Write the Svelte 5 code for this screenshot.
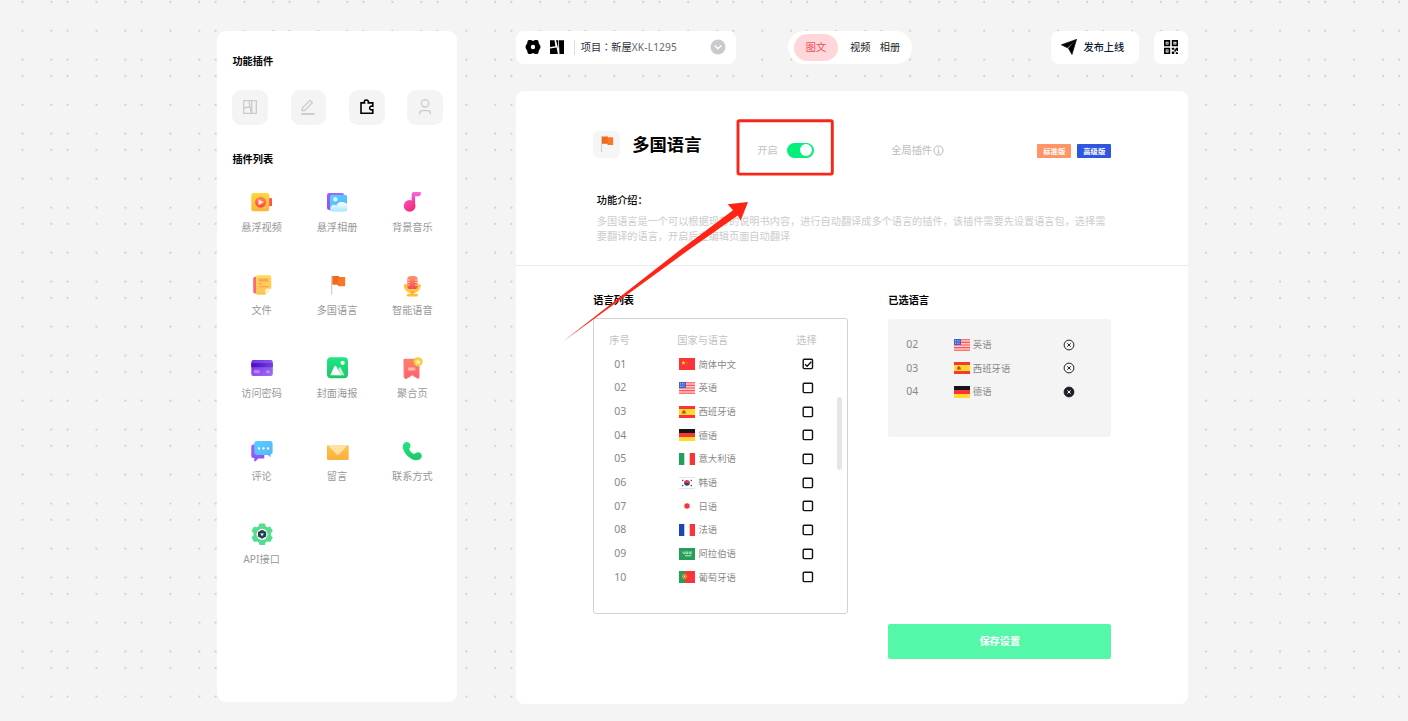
<script>
    const plugins = [
        { icon: 'video', name: '悬浮视频' },
        { icon: 'album', name: '悬浮相册' },
        { icon: 'music', name: '背景音乐' },
        { icon: 'file', name: '文件' },
        { icon: 'flag', name: '多国语言' },
        { icon: 'mic', name: '智能语音' },
        { icon: 'card', name: '访问密码' },
        { icon: 'poster', name: '封面海报' },
        { icon: 'bookmark', name: '聚合页' },
        { icon: 'comment', name: '评论' },
        { icon: 'mail', name: '留言' },
        { icon: 'phone', name: '联系方式' },
        { icon: 'api', name: 'API接口' }
    ];

    let languages = [
        { id: '01', flag: 'cn', name: '简体中文', checked: true },
        { id: '02', flag: 'us', name: '英语', checked: false },
        { id: '03', flag: 'es', name: '西班牙语', checked: false },
        { id: '04', flag: 'de', name: '德语', checked: false },
        { id: '05', flag: 'it', name: '意大利语', checked: false },
        { id: '06', flag: 'kr', name: '韩语', checked: false },
        { id: '07', flag: 'jp', name: '日语', checked: false },
        { id: '08', flag: 'fr', name: '法语', checked: false },
        { id: '09', flag: 'sa', name: '阿拉伯语', checked: false },
        { id: '10', flag: 'pt', name: '葡萄牙语', checked: false }
    ];

    let selected = [
        { id: '02', flag: 'us', name: '英语' },
        { id: '03', flag: 'es', name: '西班牙语' },
        { id: '04', flag: 'de', name: '德语', active: true }
    ];

    let tab = 'plugin';
    let enabled = true;

    // background dots, three per tile on each axis
    const tile = 73.975;
    const xs = [];
    const ys = [];
    for (let i = -1; i < 20; i++) {
        for (const o of [22.5, 51.4, 67.6]) xs.push(o + i * tile);
    }
    for (let i = 0; i < 10; i++) {
        for (const o of [2, 30.8, 59.7]) ys.push(o + i * tile);
    }

    const remove = (id) => {
        selected = selected.filter((s) => s.id !== id);
    };
</script>

{#snippet flagIcon(code)}
    <svg class="flag" width="16" height="12" viewBox="0 0 16 12">
        {#if code === 'cn'}
            <rect width="16" height="12" fill="#fb3437" />
            <path d="M4.5 2.6l.6 1.5 1.5.1-1.2 1 .4 1.6-1.3-.9-1.4.9.4-1.6-1.1-1 1.5-.1z" fill="#ffda2c" />
            <path d="M7.2 2.6l.8.8M8.2 4.3v1M7 6.6l.7-.5" stroke="#e8a02c" stroke-width=".7" />
        {:else if code === 'us'}
            <rect width="16" height="12" fill="#ffc9c9" />
            <path d="M0 .8h16M0 3.4h16M0 6h16M0 8.6h16M0 11.3h16" stroke="#fb5558" stroke-width="1.1" />
            <rect width="7" height="6" fill="#3d62cc" />
            <path d="M1 1.5h5M1 3h5M1 4.5h5" stroke="#b9c8f3" stroke-width=".7" stroke-dasharray="1 .8" />
        {:else if code === 'es'}
            <rect width="16" height="12" fill="#fb3437" />
            <rect y="3" width="16" height="6" fill="#ffda2c" />
            <path d="M2.7 7.8L3.3 5l1.5-1.2L6.4 5l1 2.8z" fill="#c7772b" />
            <path d="M4.3 5h1.2v2H4.3z" fill="#a32c2c" />
        {:else if code === 'de'}
            <rect width="16" height="4" fill="#151515" />
            <rect y="4" width="16" height="4" fill="#fb3437" />
            <rect y="8" width="16" height="4" fill="#ffda2c" />
        {:else if code === 'it'}
            <rect width="16" height="12" fill="#fff" />
            <rect width="5.3" height="12" fill="#249f58" />
            <rect x="10.7" width="5.3" height="12" fill="#fb3437" />
        {:else if code === 'kr'}
            <rect width="16" height="12" fill="#fff" />
            <path d="M0 .3h16M0 11.7h16" stroke="#cfcfcf" stroke-width=".7" />
            <circle cx="8" cy="6" r="2.8" fill="#24398f" />
            <path d="M5.200 6a2.800 2.800 0 0 1 5.600 0Q9.500 7 8 6T5.200 6z" fill="#fb3437" />
            <path d="M3.200 4l1-1.200M12.800 4l-1-1.200M3.200 8l1 1.200M12.800 8l-1 1.200" stroke="#333" stroke-width="1.100" />
        {:else if code === 'jp'}
            <rect width="16" height="12" fill="#fff" />
            <circle cx="8" cy="6" r="2.700" fill="#fb3437" />
        {:else if code === 'fr'}
            <rect width="16" height="12" fill="#fff" />
            <rect width="5.3" height="12" fill="#1b46b9" />
            <rect x="10.7" width="5.3" height="12" fill="#fb3437" />
        {:else if code === 'sa'}
            <rect width="16" height="12" fill="#249f58" />
            <path d="M3.500 3.500l1 2.200h1.300V3.500M7 3.300v2.400h1.500V3.500M10 3.500v2.200h2.200V3.300M10.700 4.200h1" fill="none" stroke="#d6f0e0" stroke-width=".8" />
            <path d="M6 7.800h6.300" stroke="#d6f0e0" stroke-width=".9" />
        {:else if code === 'pt'}
            <rect width="16" height="12" fill="#fb3437" />
            <rect width="6" height="12" fill="#249f58" />
            <circle cx="5.500" cy="5.500" r="2.300" fill="#f6b52c" />
            <rect x="4.500" y="4.400" width="2" height="2.200" fill="#d84535" />
            <rect x="5.100" y="5" width=".8" height="1" fill="#fff" />
        {/if}
    </svg>
{/snippet}

{#snippet pluginIcon(name)}
    <svg class="pluginIcon" width="24" height="24" viewBox="0 0 24 24">
        {#if name === 'video'}
            <rect x="17" y="8" width="5" height="8.300" rx="1" fill="#ff5353" />
            <rect x="1.300" y="3" width="17.900" height="18.300" rx="2.200" fill="url(#gYellow)" />
            <circle cx="10.600" cy="12.200" r="5.500" fill="url(#gRed)" />
            <path d="M8.800 9.700v5l4.600-2.500z" fill="#ffe9dc" stroke="#ffe9dc" stroke-width=".6" stroke-linejoin="round" />
        {:else if name === 'album'}
            <rect x="2" y="3" width="17" height="17" rx="2.200" fill="url(#gPurple)" />
            <rect x="5" y="4.700" width="17" height="16.600" rx="2" fill="url(#gSky)" />
            <circle cx="10.300" cy="9.300" r="2.200" fill="#d5f4ff" />
            <path d="M5.500 20.800v-3.500c1.500-3 4-3.300 5.800-1.500 1.700-4 6-5 10.700-1.700v5.200a2 2 0 0 1-2 2H7z" fill="url(#gCloud)" />
        {:else if name === 'music'}
            <path d="M11.700 3.500a2 2 0 0 1 2-1.500h7.100v1.300c0 2-.8 3-2.600 3h-3.100v9.500h-3.400z" fill="url(#gNote)" />
            <circle cx="9.600" cy="15.900" r="5.900" fill="url(#gPink)" />
        {:else if name === 'file'}
            <rect x="3.200" y="3.800" width="6" height="16.600" rx="2" fill="#ff6870" />
            <path d="M8 2.300h11.300a2 2 0 0 1 2 2v11.200l-6 6.300H8a2 2 0 0 1-2-2V4.300a2 2 0 0 1 2-2z" fill="url(#gFile)" />
            <path d="M15.300 21.800v-4.600q0-1.700 1.800-1.700h4.200z" fill="#fff2d0" />
            <path d="M8.500 10.600h3.500M8.500 13.700h10" stroke="#ffa04c" stroke-width="1.200" />
            <path d="M8.500 5.500h10v3.200h-10z" fill="#ffa553" />
        {:else if name === 'flag'}
            <path d="M6.600 2.500v19" stroke="#cecece" stroke-width="1.300" />
            <path d="M7.300 3h6.700v8.700H7.300z" fill="#f06a1b" />
            <path d="M13 4h7.100v9.200H13z" fill="#ff7321" />
            <path d="M13 11.700h1v-1z" fill="#b74b0b" />
        {:else if name === 'mic'}
            <path d="M4.300 11.800v1a8 7 0 0 0 16 0v-1h-3v1a5 4.500 0 0 1-10 0v-1z" fill="#ffc43a" stroke="#ffc43a" stroke-linejoin="round" />
            <path d="M10.900 18h3v3h-3z" fill="#ffae2e" />
            <rect x="7" y="20.800" width="10.800" height="2.600" rx="1" fill="#ffbd32" />
            <rect x="7.200" y="3" width="10.400" height="13.300" rx="3.500" fill="url(#gMic)" />
            <path d="M7.200 7h2.600M15 7h2.600M7.200 9.500h2.600M15 9.500h2.600M7.200 12h2.600M15 12h2.600" stroke="#ffd9c9" stroke-width=".9" />
        {:else if name === 'card'}
            <rect x="1.300" y="4" width="21.500" height="16" rx="2" fill="url(#gCard)" />
            <path d="M1.300 7h21.500v4.200H1.300z" fill="url(#gStripe)" />
            <rect x="3.600" y="14" width="6.300" height="3.300" rx="1.500" fill="#c57cf5" />
            <rect x="16" y="14.700" width="4" height="2" rx="1" fill="#c39bf5" />
        {:else if name === 'poster'}
            <rect x="2" y="1.300" width="21" height="21" rx="4" fill="url(#gGreen)" />
            <circle cx="17.600" cy="6.800" r="2.100" fill="#fff" />
            <path d="M13.500 12.500q1.200-3 2.600 0l3.400 6.700h-6z" fill="#b7f3d0" />
            <path d="M9.200 10.700q1.200-1.800 2.300 0l4.400 8.500H5.300z" fill="#fff" />
        {:else if name === 'bookmark'}
            <path d="M4 3.300h15v17.800q0 2-1.700.9L13.500 19.800q-1.300-2-2.700 0l-4 2.500q-1.900.7-2.600-1z" fill="url(#gBook)" stroke="#ff7175" />
            <rect x="8.100" y="11.500" width="7.200" height="3" fill="#ffb7ad" />
            <circle cx="18" cy="5.800" r="4.600" fill="#ffc934" />
            <path d="M18 2.800l1 2 2.200.3-1.600 1.500.4 2.200-2-1-2 1 .4-2.200-1.600-1.500 2.200-.3z" fill="#fff0bc" />
        {:else if name === 'comment'}
            <path d="M3.300 5.500h11v14h-6l-3 3q-1 .4-1-1V19h-1a2 2 0 0 1-2-2V7.500a2 2 0 0 1 2-2z" fill="url(#gPurple)" />
            <path d="M6.600 2h13.700a2.300 2.300 0 0 1 2.300 2.300v9a2.300 2.300 0 0 1-2 2.300v2.700l-2.700-2.200H6.600a2.300 2.300 0 0 1-2.300-2.300V4.300A2.300 2.300 0 0 1 6.600 2z" fill="url(#gSky)" />
            <path d="M9 9.500h.1M13.500 9.500h.1M18 9.500h.1" stroke="#fff" stroke-width="2.300" stroke-linecap="round" />
        {:else if name === 'mail'}
            <rect x="2" y="6" width="21.700" height="15" rx="1.300" fill="url(#gMail)" />
            <path d="M2.500 6h20.700L13.700 15.600q-1 .9-2 0z" fill="#ffe1a3" />
        {:else if name === 'phone'}
            <path d="M4.500 3.700c2.300-1.900 6-.3 6 2.900 0 2-1.500 2.400-1.200 3.800.3 1.500 2.900 4 4.600 4.300 1.500.3 2-1.400 4.100-1.400 3.100 0 4.900 3.600 3 6-1.800 2.200-5.900 2.600-9.500.6C7.700 17.700 4.800 14.500 3.500 11c-1-2.900-.9-5.800 1-7.300z" fill="url(#gGreen)" />
        {:else if name === 'api'}
            <path d="M9.500 1.500h5.300l.9 2.800 1.600.9 2.900-.6 2.600 4.500-2 2.200v2l2 2.200-2.600 4.500-2.900-.6-1.600.9-.9 2.700H9.500l-.9-2.700-1.600-.9-2.900.6-2.600-4.500 2-2.200v-2l-2-2.200 2.600-4.500 2.900.6 1.600-.9z" fill="#56dc91" />
            <circle cx="12.100" cy="12.300" r="5.500" fill="#fff" />
            <path d="M12.100 7.800l4.100 2.100v4.600l-4.100 2.300L8 14.500V9.900z" fill="#263f50" />
            <path d="M10.300 11.600h3.600l-1.800 2.700z" fill="#fff" />
        {/if}
    </svg>
{/snippet}

<svg class="defs" width="0" height="0">
    <defs>
        <linearGradient id="gYellow" x2="0" y2="1"><stop stop-color="#fdd93a" /><stop offset="1" stop-color="#feb33c" /></linearGradient>
        <linearGradient id="gRed" x2="0" y2="1"><stop stop-color="#ff8a4f" /><stop offset="1" stop-color="#ff4545" /></linearGradient>
        <linearGradient id="gPurple" x2="0" y2="1"><stop stop-color="#a65bff" /><stop offset="1" stop-color="#9051f8" /></linearGradient>
        <linearGradient id="gSky" x2="1" y2="1"><stop stop-color="#57d0ff" /><stop offset="1" stop-color="#58b3fb" /></linearGradient>
        <linearGradient id="gCloud" x2="0" y2="1"><stop stop-color="#fff" /><stop offset="1" stop-color="#a9e6ff" /></linearGradient>
        <linearGradient id="gNote" x2="0" y2="1"><stop stop-color="#fa66e3" /><stop offset="1" stop-color="#f32783" /></linearGradient>
        <linearGradient id="gPink" x2="1" y2="1"><stop stop-color="#fd50c4" /><stop offset="1" stop-color="#f32266" /></linearGradient>
        <linearGradient id="gFile" x2="0" y2="1"><stop stop-color="#ffd95a" /><stop offset="1" stop-color="#ffc257" /></linearGradient>
        <linearGradient id="gMic" x2="0" y2="1"><stop stop-color="#ff9668" /><stop offset="1" stop-color="#ff4649" /></linearGradient>
        <linearGradient id="gCard" x2="1" y2="1"><stop stop-color="#7430e6" /><stop offset="1" stop-color="#a071f0" /></linearGradient>
        <linearGradient id="gStripe"><stop stop-color="#4a0bc5" /><stop offset="1" stop-color="#7141d8" /></linearGradient>
        <linearGradient id="gGreen" x2="0" y2="1"><stop stop-color="#1ce884" /><stop offset="1" stop-color="#20c568" /></linearGradient>
        <linearGradient id="gBook" x2="0" y2="1"><stop stop-color="#ff8165" /><stop offset="1" stop-color="#ff6175" /></linearGradient>
        <linearGradient id="gMail" x2="0" y2="1"><stop stop-color="#ffc24b" /><stop offset="1" stop-color="#fbb03c" /></linearGradient>
    </defs>
</svg>

<div class="page">
    <svg class="dots" width="1408" height="721">
        {#each ys as y}
            {#each xs as x}
                <circle cx={x} cy={y} r="1.15" />
            {/each}
        {/each}
    </svg>

    <aside class="sidebar">
        <h2>功能插件</h2>
        <div class="tabs">
            <button class:active={tab === 'layout'} on:click={() => (tab = 'layout')} aria-label="布局">
                <svg width="16" height="16" viewBox="0 0 16 16"><path d="M1.700 1.700h12.600v12.600H1.700zM7 1.700l1.100 7.200L9.600 14.300M1.700 8.800l6.300-.8M9.800 1.700v12.600" /></svg>
            </button>
            <button class:active={tab === 'edit'} on:click={() => (tab = 'edit')} aria-label="编辑">
                <svg width="16" height="16" viewBox="0 0 16 16"><path d="M2.200 11.500V9l7.900-7.600 2.200 2.300-7.500 7.800z" /><path d="M1.200 15h13.500" stroke-width="1.900" /></svg>
            </button>
            <button class:active={tab === 'plugin'} on:click={() => (tab = 'plugin')} aria-label="插件">
                <svg width="16" height="16" viewBox="0 0 16 16"><path d="M2 3.900h3.500Q4.800 1 7.300 1t2 2.900h4.500v3.400q-3.100-.7-3.100 1.700t3.100 1.800v3.500H2z" stroke-width="1.600" /></svg>
            </button>
            <button class:active={tab === 'user'} on:click={() => (tab = 'user')} aria-label="用户">
                <svg width="16" height="16" viewBox="0 0 16 16"><circle cx="8" cy="4.300" r="3.700" /><path d="M2.600 15.300v-.8q0-2.800 2.800-2.800h5.200q2.800 0 2.800 2.800v.8" /></svg>
            </button>
        </div>
        <h2>插件列表</h2>
        <div class="plugins">
            {#each plugins as p}
                <div class="plugin">
                    {@render pluginIcon(p.icon)}
                    <span>{p.name}</span>
                </div>
            {/each}
        </div>
    </aside>

    <main>
        <div class="topbar">
            <div class="project">
                <svg width="16" height="16" viewBox="0 0 16 16"><path fill-rule="evenodd" d="M3.800 1h2.400l.9.800h1.800l.9-.8h2.400l1.100.7.500 2.500 1.600 2.700v2.200l-1.600 2.700-.5 2.500-1.100.700H9.800l-.9-.8H7.100l-.9.800H3.800l-1.100-.7-.5-2.500L.6 9.100V6.900l1.600-2.700.5-2.500zM8 5.800a2.200 2.200 0 1 0 0 4.400 2.200 2.200 0 0 0 0-4.400z" /></svg>
                <svg width="16" height="16" viewBox="0 0 16 16"><path d="M1 1.200h4.500l.9 6-5.400.8zM1 9.400l6.600-.9 1.300 6.500H1zM7 1.200h2.200v8.400zM9.800 1.200H15V15h-4.500z" /></svg>
                <i class="line"></i>
                <span class="projectName">项目<b>：</b>新屋<em>XK-L1295</em></span>
                <svg width="16" height="16" viewBox="0 0 16 16"><circle cx="8" cy="8" r="7.500" fill="#c9cacf" /><path d="M4.700 6.500L8 9.700l3.300-3.200" fill="none" stroke="#fff" stroke-width="1.400" /></svg>
            </div>
            <div class="modes">
                <span class="mode on">图文</span>
                <span class="mode">视频</span>
                <span class="mode">相册</span>
            </div>
            <button class="publish">
                <svg width="16" height="16" viewBox="0 0 16 16"><path d="M15.500.4L.3 5.800l6 2.900zM15.500.4L7.300 9.200l3.700 6.400z" stroke="#000" stroke-width=".6" /></svg>
                发布上线
            </button>
            <button class="qr" aria-label="二维码">
                <svg width="14" height="14" viewBox="0 0 14 14"><path fill-rule="evenodd" d="M0 0h6.200v6.200H0zM1.700 1.700v2.800h2.800V1.700zM7.800 0H14v6.200H7.800zM9.400 1.700v2.800h3V1.700zM0 7.800h6.200V14H0zM1.700 9.400v3h2.800v-3z" /><path d="M2.500 2.500h1.200v1.200H2.500zM10.100 2.700h1.500v.9h-1.500zM2.500 10.300h1.200v1.200H2.500zM7.800 7.800h2.500v2H7.800zM12 7.800h2v3.300h-1.600V9.700H11zM10.300 9.800h1.700v1.700h-1.700zM7.800 11.500h2.500V14H7.800zM11.800 12.300H14V14h-2.200z" /></svg>
            </button>
        </div>

        <section class="panel">
            <div class="intro">
                <div class="head">
                    <div class="tileIcon">
                        <svg width="16" height="20" viewBox="0 0 16 20"><path d="M2.500 2v16" stroke="#cecece" stroke-width="1.100" /><path d="M3 2.500h6v7.300H3z" fill="#f06a1b" /><path d="M8.500 3.300h5.600V11H8.500z" fill="#ff7321" /></svg>
                    </div>
                    <h1>多国语言</h1>
                    <label class="switchBox">
                        开启
                        <input type="checkbox" bind:checked={enabled} />
                        <span class="switch"></span>
                    </label>
                    <span class="scope">
                        全局插件
                        <svg width="11" height="11" viewBox="0 0 11 11"><circle cx="5.500" cy="5.500" r="4.600" fill="none" stroke="#b8b8b8" /><path d="M5.500 2.600v1M4.700 4.900h.9v3M4.500 8h2.200" fill="none" stroke="#b8b8b8" stroke-width=".9" /></svg>
                    </span>
                    <div class="tags">
                        <span class="tag">标准版</span>
                        <span class="tag pro">高级版</span>
                    </div>
                </div>
                <h3>功能介绍：</h3>
                <p>多国语言是一个可以根据现有的说明书内容，进行自动翻译成多个语言的插件，该插件需要先设置语言包，选择需<br />要翻译的语言，开启后在编辑页面自动翻译</p>
            </div>

            <div class="body">
                <div class="left">
                    <h2>语言列表</h2>
                    <div class="list">
                        <div class="row header">
                            <span>序号</span>
                            <span>国家与语言</span>
                            <span>选择</span>
                        </div>
                        {#each languages as l}
                            <div class="row">
                                <span class="num">{l.id}</span>
                                {@render flagIcon(l.flag)}
                                <span class="lang">{l.name}</span>
                                <button class="check" on:click={() => (l.checked = !l.checked)} aria-label={l.name}>
                                    <svg width="12" height="12" viewBox="0 0 12 12">
                                        <rect x="1.200" y="1.300" width="9.300" height="9.300" rx="1" />
                                        {#if l.checked}
                                            <path d="M3 6.200l2.100 2 4.200-4.400" />
                                        {/if}
                                    </svg>
                                </button>
                            </div>
                        {/each}
                        <i class="thumb"></i>
                    </div>
                </div>
                <div class="right">
                    <h2>已选语言</h2>
                    <div class="chosen">
                        {#each selected as s}
                            <div class="row">
                                <span class="num">{s.id}</span>
                                {@render flagIcon(s.flag)}
                                <span class="lang">{s.name}</span>
                                <button class="remove" class:active={s.active} on:click={() => remove(s.id)} aria-label="删除">
                                    <svg width="12" height="12" viewBox="0 0 12 12"><circle cx="6" cy="6" r="4.900" /><path d="M4.300 4.300l3.400 3.400M7.700 4.300L4.300 7.700" /></svg>
                                </button>
                            </div>
                        {/each}
                    </div>
                    <button class="save">保存设置</button>
                </div>
            </div>
        </section>
    </main>

    <!-- guide arrow and frame around the switch -->
    <svg class="guide" width="1408" height="721">
        <rect x="738" y="120.800" width="94.300" height="53.300" rx="1.500" fill="none" stroke="#fb2418" stroke-width="2.900" />
        <path d="M563 341.500L680 250 733 210.300 727.700 204.300 748 202 740.700 220.500 737.700 215.500 688.500 250z" fill="#ff2415" />
    </svg>
</div>

<style>
    :global(body) {
        margin: 0;
        background: #f4f4f4;
    }
    .defs {
        position: absolute;
    }
    .page {
        position: relative;
        display: flex;
        align-items: flex-start;
        box-sizing: border-box;
        width: 1408px;
        height: 721px;
        padding: 30.5px 0 0 217.4px;
        overflow: hidden;
        background: #f4f4f4;
        font-family: "Noto Sans", "Noto Sans CJK SC", sans-serif;
        font-size: 10.18px;
        line-height: 15px;
        color: #999;
    }
    .dots, .guide {
        position: absolute;
        top: 0;
        left: 0;
        pointer-events: none;
    }
    .dots {
        fill: #d3d3d3;
    }
    h1, h2, h3, p {
        margin: 0;
    }
    h2 {
        font-size: 10.18px;
        line-height: 15px;
        font-weight: 700;
        color: #000;
    }
    button {
        padding: 0;
        border: none;
        font: inherit;
        cursor: pointer;
    }
    svg {
        display: block;
        flex: none;
    }
    .sidebar {
        position: relative;
        box-sizing: border-box;
        flex: none;
        width: 240px;
        height: 671.5px;
        padding: 23.500px 14.5px 0 15px;
        border-radius: 9px;
        background: #fff;
    }
    .tabs {
        display: flex;
        justify-content: space-between;
        margin: 20.500px 0 26.5px;
    }
    .tabs button {
        display: flex;
        justify-content: center;
        align-items: center;
        width: 35.5px;
        height: 35.5px;
        border-radius: 9px;
        background: #f4f4f4;
    }
    .tabs svg {
        fill: none;
        stroke: #cbcbcb;
        stroke-width: 1.3;
    }
    .tabs .active svg {
        stroke: #000;
    }
    .plugins {
        display: grid;
        grid-template-columns: repeat(3, 75.4px);
        grid-auto-rows: 82.9px;
        margin: 23.5px 0 0 -8.500px;
    }
    .plugin {
        display: flex;
        flex-direction: column;
        align-items: center;
        gap: 6px;
    }
    main {
        position: relative;
        flex: none;
        width: 671.500px;
        margin-left: 58.900px;
    }
    .topbar {
        display: flex;
        height: 33.900px;
    }
    .project {
        display: flex;
        align-items: center;
        box-sizing: border-box;
        width: 220px;
        padding: 0 10.500px 0 8.500px;
        border-radius: 8px;
        background: #fff;
    }
    .project svg + svg {
        margin-left: 8px;
    }
    .line {
        width: 1px;
        height: 15px;
        margin: 0 6px 0 9px;
        background: #dcdde2;
    }
    .projectName {
        flex: 1;
        color: #2b2f3d;
        white-space: nowrap;
    }
    .projectName b {
        font-family: "Noto Sans CJK TC", sans-serif;
        font-weight: 400;
    }
    .projectName em {
        font-style: normal;
        letter-spacing: .15px;
        color: #666;
    }
    .modes {
        display: flex;
        align-items: center;
        box-sizing: border-box;
        width: 124px;
        margin-left: 51.700px;
        padding-left: 6px;
        border-radius: 17px;
        background: #fff;
        color: #222;
    }
    .mode {
        margin-right: 9.500px;
    }
    .mode.on {
        width: 44px;
        margin-right: 12px;
        border-radius: 14px;
        background: #ffd6da;
        color: #ef4e55;
        line-height: 27px;
        text-align: center;
    }
    .publish, .qr {
        display: flex;
        justify-content: center;
        align-items: center;
        border-radius: 8px;
        background: #fff;
    }
    .publish {
        justify-content: flex-start;
        gap: 6px;
        width: 88.400px;
        margin-left: 139px;
        padding-left: 10.500px;
        box-sizing: border-box;
        color: #0e1b36;
        font-weight: 500;
    }
    .publish svg, .qr svg {
        fill: #000;
    }
    .qr {
        width: 34px;
        margin-left: auto;
    }
    .panel {
        height: 613px;
        margin-top: 26.900px;
        border-radius: 8px;
        background: #fff;
    }
    .intro {
        box-sizing: border-box;
        height: 174.700px;
        padding: 39.500px 76.500px 0 77px;
        border-bottom: 1px solid #ececec;
    }
    .head {
        display: flex;
        align-items: center;
        height: 27px;
    }
    .tileIcon {
        display: flex;
        justify-content: center;
        align-items: center;
        width: 27px;
        height: 27px;
        border-radius: 5px;
        background: #f6f6f6;
    }
    h1 {
        width: 125px;
        margin-left: 12px;
        font-size: 17.300px;
        line-height: 27px;
        font-weight: 700;
        color: #000;
    }
    .switchBox {
        display: flex;
        align-items: center;
        width: 134px;
        margin-top: 12px;
        color: #c4c4c4;
    }
    .switchBox input {
        display: none;
    }
    .switch {
        box-sizing: border-box;
        width: 27px;
        height: 15px;
        margin-left: 9px;
        padding: 1.500px;
        border-radius: 8px;
        background: #ccc;
    }
    .switch::before {
        content: "";
        display: block;
        width: 12px;
        height: 12px;
        border-radius: 50%;
        background: #fff;
    }
    input:checked + .switch {
        background: #00f07a;
    }
    input:checked + .switch::before {
        margin-left: auto;
    }
    .scope {
        display: flex;
        align-items: center;
        gap: 1px;
        margin-top: 12px;
        color: #bbb;
    }
    .tags {
        display: flex;
        gap: 6px;
        margin: 13px 0 0 auto;
    }
    .tag {
        width: 34px;
        height: 13.500px;
        border-radius: 1px;
        background: #ff9566;
        color: #fff;
        font-size: 7.300px;
        font-weight: 700;
        line-height: 14px;
        text-align: center;
    }
    .tag.pro {
        background: #3055df;
    }
    h3 {
        margin: 35px 0 0 3.500px;
        font-size: 10.180px;
        line-height: 15px;
        font-weight: 500;
        color: #000;
    }
    p {
        margin: 6px 0 0 3.500px;
        color: #ccc;
        white-space: nowrap;
    }
    .body {
        display: flex;
        gap: 40px;
        padding: 27.200px 76.500px 0 77px;
    }
    .left {
        width: 255px;
    }
    .right {
        display: flex;
        flex-direction: column;
        flex: 1;
    }
    .list {
        position: relative;
        box-sizing: border-box;
        height: 296px;
        margin-top: 10.300px;
        padding: 9.400px 0 0 15px;
        border: 1px solid #d2d2d2;
        border-radius: 3px;
    }
    .row {
        display: flex;
        align-items: center;
        height: 23.670px;
        font-size: 9.400px;
        color: #888;
    }
    .row.header {
        font-size: 10.180px;
        color: #c2c2c2;
    }
    .header span {
        width: 68px;
    }
    .header span:nth-child(2) {
        width: 119px;
    }
    .header span:last-child {
        width: auto;
    }
    .num {
        box-sizing: border-box;
        width: 70.200px;
        padding-left: 5px;
        font-size: 10.500px;
    }
    .lang {
        width: 103.500px;
        margin-left: 3px;
    }
    .check {
        background: none;
    }
    .check svg {
        fill: none;
        stroke: #111;
        stroke-width: 1.4;
    }
    .thumb {
        position: absolute;
        top: 78px;
        right: 5px;
        width: 5px;
        height: 73px;
        border-radius: 3px;
        background: #e6e6e6;
    }
    .chosen {
        box-sizing: border-box;
        height: 118px;
        margin-top: 10.800px;
        padding: 13.900px 0 0 13px;
        border-radius: 3px;
        background: #f4f4f4;
    }
    .chosen .num {
        width: 52.500px;
    }
    .chosen .lang {
        width: 90px;
    }
    .remove {
        background: none;
    }
    .remove svg {
        fill: none;
        stroke: #22252b;
        stroke-width: 1;
    }
    .remove.active circle {
        fill: #1b1e24;
    }
    .remove.active path {
        stroke: #fff;
    }
    .save {
        height: 35.500px;
        margin-top: 187px;
        border-radius: 2px;
        background: #55f7a9;
        color: #fff;
        font-weight: 700;
    }
</style>
